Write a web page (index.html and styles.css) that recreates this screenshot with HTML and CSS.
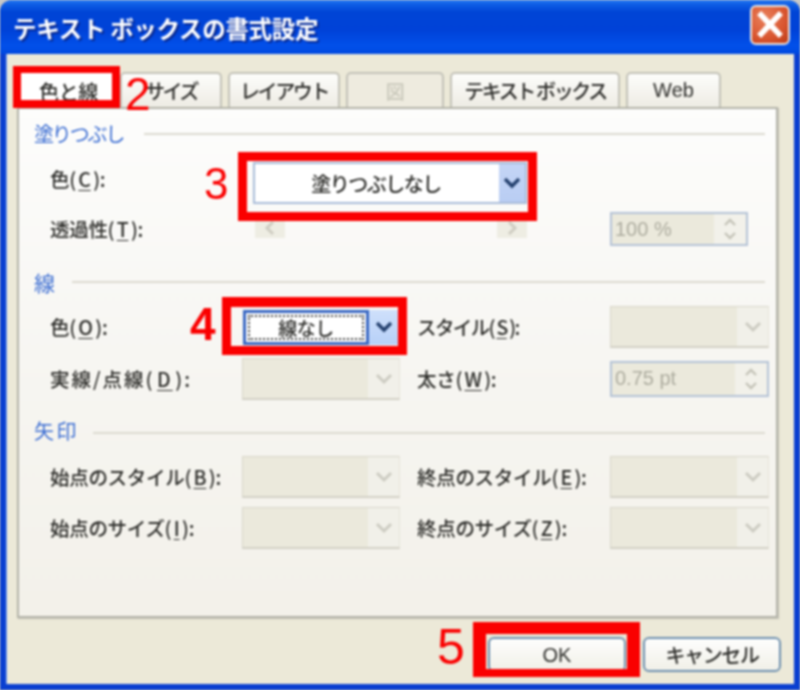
FILE: index.html
```html
<!DOCTYPE html>
<html lang="ja">
<head>
<meta charset="utf-8">
<title>テキスト ボックスの書式設定</title>
<link rel="stylesheet" href="styles.css">
</head>
<body>
<div class="window">
  <header class="titlebar">
    <span class="title">テキスト ボックスの書式設定</span>
    <button class="close" aria-label="閉じる">
      <svg viewBox="0 0 40 40" width="40" height="40"><path d="M11 10 L29 29 M29 10 L11 29" stroke="#fff" stroke-width="5.5" stroke-linecap="square" fill="none"/></svg>
    </button>
  </header>
  <div class="client">
    <nav class="tabs">
      <span class="tab tab-active">色と線</span>
      <span class="tab tab-size">サイズ</span>
      <span class="tab tab-layout">レイアウト</span>
      <span class="tab tab-pic"><span class="pic-glyph">図</span></span>
      <span class="tab tab-textbox">テキスト ボックス</span>
      <span class="tab tab-web">Web</span>
    </nav>
    <main class="panel">
      <div class="heading heading-first"><span>塗りつぶし</span><i class="rule"></i></div>
      <div class="row row-fill">
        <label class="label">色(<u>C</u>):</label>
        <div class="combo">
          <span class="combo-text">塗りつぶしなし</span>
          <span class="combo-btn"><svg viewBox="0 0 20 14" width="20" height="14"><path d="M3 3 L10 10 L17 3" stroke="#24406e" stroke-width="3.4" fill="none"/></svg></span>
        </div>
      </div>
      <div class="row row-alpha">
        <label class="label">透過性(<u>T</u>):</label>
        <div class="slider">
          <span class="slider-btn"><svg viewBox="0 0 14 18" width="14" height="18"><path d="M10 3 L4 9 L10 15" stroke="#cfcdc2" stroke-width="3" fill="none"/></svg></span>
          <span class="slider-btn"><svg viewBox="0 0 14 18" width="14" height="18"><path d="M4 3 L10 9 L4 15" stroke="#cfcdc2" stroke-width="3" fill="none"/></svg></span>
        </div>
        <i></i>
        <div class="spin"><span class="spin-text">100 %</span><span class="spin-btn"><svg viewBox="0 0 16 28" width="16" height="28"><path d="M3 10 L8 5 L13 10 M3 18 L8 23 L13 18" stroke="#c4c3b8" stroke-width="2.4" fill="none"/></svg></span></div>
      </div>

      <div class="heading heading-line"><span>線</span><i class="rule"></i></div>
      <div class="row row-line1">
        <label class="label">色(<u>O</u>):</label>
        <div class="combo combo-focus">
          <span class="combo-text"><span class="focus-box">線なし</span></span>
          <span class="combo-btn"><svg viewBox="0 0 20 14" width="20" height="14"><path d="M3 3 L10 10 L17 3" stroke="#24406e" stroke-width="3.4" fill="none"/></svg></span>
        </div>
        <i></i>
        <label class="label label-tight">スタイル(<u>S</u>):</label>
        <div class="select"><span class="select-btn"><svg viewBox="0 0 20 14" width="20" height="14"><path d="M3 3 L10 10 L17 3" stroke="#cdccc2" stroke-width="3" fill="none"/></svg></span></div>
      </div>
      <div class="row row-line2">
        <label class="label label-wide">実線/点線(<u>D</u>):</label>
        <div class="select"><span class="select-btn"><svg viewBox="0 0 20 14" width="20" height="14"><path d="M3 3 L10 10 L17 3" stroke="#cdccc2" stroke-width="3" fill="none"/></svg></span></div>
        <i></i>
        <label class="label">太さ(<u>W</u>):</label>
        <div class="spin spin-tall"><span class="spin-text">0.75 pt</span><span class="spin-btn"><svg viewBox="0 0 16 28" width="16" height="28"><path d="M3 10 L8 5 L13 10 M3 18 L8 23 L13 18" stroke="#c4c3b8" stroke-width="2.4" fill="none"/></svg></span></div>
      </div>

      <div class="heading heading-arrow"><span>矢印</span><i class="rule"></i></div>
      <div class="row row-arrow1">
        <label class="label">始点のスタイル(<u>B</u>):</label>
        <div class="select"><span class="select-btn"><svg viewBox="0 0 20 14" width="20" height="14"><path d="M3 3 L10 10 L17 3" stroke="#cdccc2" stroke-width="3" fill="none"/></svg></span></div>
        <i></i>
        <label class="label">終点のスタイル(<u>E</u>):</label>
        <div class="select"><span class="select-btn"><svg viewBox="0 0 20 14" width="20" height="14"><path d="M3 3 L10 10 L17 3" stroke="#cdccc2" stroke-width="3" fill="none"/></svg></span></div>
      </div>
      <div class="row row-arrow2">
        <label class="label">始点のサイズ(<u>I</u>):</label>
        <div class="select"><span class="select-btn"><svg viewBox="0 0 20 14" width="20" height="14"><path d="M3 3 L10 10 L17 3" stroke="#cdccc2" stroke-width="3" fill="none"/></svg></span></div>
        <i></i>
        <label class="label">終点のサイズ(<u>Z</u>):</label>
        <div class="select"><span class="select-btn"><svg viewBox="0 0 20 14" width="20" height="14"><path d="M3 3 L10 10 L17 3" stroke="#cdccc2" stroke-width="3" fill="none"/></svg></span></div>
      </div>
    </main>
    <footer class="footer">
      <button class="btn btn-ok">OK</button>
      <button class="btn btn-cancel">キャンセル</button>
    </footer>
  </div>

  <span class="mark mark-tab"></span>
  <span class="mark mark-fill"></span>
  <span class="mark mark-line"></span>
  <span class="mark mark-ok"></span>
  <span class="num num2">2</span>
  <span class="num num3">3</span>
  <span class="num num4">4</span>
  <span class="num num5">5</span>
</div>
</body>
</html>
```
FILE: styles.css
```css
* { box-sizing: border-box; }
html, body { margin: 0; padding: 0; background: #c9c9c6; }
body { width: 800px; height: 690px; overflow: hidden; font-family: "Noto Sans CJK JP", "Liberation Sans", sans-serif; }

.window {
  position: relative;
  width: 800px;
  height: 690px;
  display: flex;
  flex-direction: column;
  border-radius: 12px 12px 0 0;
  background: #0a3fd0;
  filter: blur(0.85px);
  overflow: hidden;
}

.titlebar {
  height: 54px;
  flex: none;
  display: flex;
  align-items: center;
  justify-content: space-between;
  padding: 0 10px 0 13px;
  background: linear-gradient(180deg, #2a7cf2 0, #0f5fe6 4px, #0045d6 12px, #0042d8 30px, #0250ea 46px, #0049e0 54px);
}
.title {
  color: #fff;
  font-size: 23.5px;
  font-weight: 700;
  line-height: 1;
  letter-spacing: -0.3px;
  text-shadow: 2px 2px 1px #0a2a90;
  margin-top: 4px;
}
.close {
  width: 40px;
  height: 40px;
  padding: 0;
  margin-top: -5px;
  border: 2px solid #e9e4e0;
  border-radius: 6px;
  background: radial-gradient(circle at 35% 30%, #e9815c 0, #d9552f 60%, #bb3a16 100%);
  display: flex;
  align-items: center;
  justify-content: center;
}
.close svg { margin: -2px; }

.client {
  flex: 1;
  margin: 0 6px 6px 7px;
  padding: 18px 16px 0 10px;
  background: #ece9d8;
  display: flex;
  flex-direction: column;
  box-shadow: -1px 0 0 #7fa6f0;
}

.tabs {
  height: 35px;
  flex: none;
  display: flex;
  align-items: flex-end;
  gap: 6px;
}
.tab {
  height: 35px;
  display: flex;
  align-items: center;
  justify-content: center;
  font-size: 20px;
  font-weight: 500;
  color: #2e2e2b;
  background: linear-gradient(180deg, #fdfdfb, #eeece4);
  border: 2px solid #c3c2b8;
  border-bottom: 0;
  border-radius: 5px 5px 0 0;
  letter-spacing: -0.4px;
}
.tab-active { width: 103px; height: 37px; margin-right: -6px; background: #fff; padding-top: 3px; }
.tab-size { width: 102px; letter-spacing: -2.4px; }
.tab-layout { width: 112px; letter-spacing: -2.4px; }
.tab-pic { width: 98px; background: #eeebdf; }
.pic-glyph { color: #c9c8bb; font-size: 19px; }
.tab-textbox { width: 170px; letter-spacing: -2.4px; }
.tab-web { width: 95px; font-family: "Liberation Sans", sans-serif; letter-spacing: 0; }

.panel {
  height: 511px;
  flex: none;
  border: 2px solid #b3b3a8;
  background: linear-gradient(180deg, #fdfdfc 0, #f7f6f2 50%, #f3f1ea 100%);
  box-shadow: 1px 1px 1px #c9c8bc;
  padding-top: 13px;
}

.heading {
  height: 24px;
  display: flex;
  align-items: center;
  padding: 0 11px 0 15px;
  font-size: 20px;
  line-height: 24px;
  color: #3a6cd2;
}
.rule { flex: 1; height: 2px; background: #dcdad0; }
.heading-first { gap: 21px; letter-spacing: -2.2px; }
.heading-line { margin-top: 24px; gap: 17px; font-size: 21px; }
.heading-arrow { margin-top: 19px; gap: 14px; letter-spacing: 2.5px; }
.heading-arrow .rule { position: relative; top: 2px; }

.row {
  display: grid;
  grid-template-columns: 192px 158px 17px 193px 159px;
  padding-left: 31px;
  align-items: center;
}
.label { font-size: 19.5px; font-weight: 500; line-height: 24px; color: #2e2e2b; letter-spacing: -0.3px; white-space: nowrap; }
.label u { margin: 0 2.5px; text-underline-offset: 3px; }
.label-tight { letter-spacing: -1.6px; }
.label-wide { letter-spacing: 2px; }

.row-fill { grid-template-columns: 203px 274px; height: 42px; margin-top: 16px; }
.row-fill .label { margin-top: -8px; }
.row-alpha { grid-template-columns: 205px 272px 83px 138px; height: 34px; margin-top: 8px; }
.row-line1 { height: 41px; margin-top: 12px; }
.row-line2 { height: 42px; margin-top: 11px; }
.row-arrow1 { height: 42px; margin-top: 13px; }
.row-arrow2 { height: 42px; margin-top: 9px; }

.combo {
  height: 42px;
  display: flex;
  background: #fff;
  border: 2px solid #a9bcd8;
}
.combo-text {
  flex: 1;
  display: flex;
  align-items: center;
  justify-content: center;
  font-size: 20px;
  font-weight: 500;
  color: #2e2e2b;
  letter-spacing: -1.5px;
  padding-right: 2px;
}
.combo-btn {
  width: 26px;
  flex: none;
  display: flex;
  align-items: center;
  justify-content: center;
  background: linear-gradient(180deg, #c4d5f6, #b9cdf3);
}

.combo-focus {
  height: 35px;
  margin: 0 1px;
  border: 0;
  background: none;
}
.combo-focus .combo-text {
  border: 3px solid #3a68c2;
  background: #fff;
  padding: 2px;
  letter-spacing: -0.5px;
}
.combo-focus .combo-btn { width: 30px; background: linear-gradient(180deg, #cfe0fb, #b7d0f8); }
.focus-box {
  width: 100%;
  height: 100%;
  display: flex;
  align-items: center;
  justify-content: center;
  border: 2px dotted #444;
  font-size: 19px;
  line-height: 1;
}

.select {
  height: 42px;
  display: flex;
  justify-content: flex-end;
  background: #ebe9dc;
  border: 1px solid #d8d6ca;
  border-right-color: #e6e4d9;
  border-bottom: 2px solid #d3d1c6;
}
.select-btn {
  width: 31px;
  display: flex;
  align-items: center;
  justify-content: center;
  background: #f1f0e9;
}

.slider {
  height: 20px;
  margin-top: -2px;
  display: flex;
  justify-content: space-between;
}
.slider-btn {
  width: 30px;
  display: flex;
  align-items: center;
  justify-content: center;
  background: #eeede3;
}

.spin {
  height: 34px;
  display: flex;
  justify-content: space-between;
  background: #ebe9dc;
  border: 2px solid #b5c3d6;
}
.spin-tall { height: 36px; }
.spin-text {
  font-family: "Liberation Sans", sans-serif;
  font-size: 20px;
  line-height: 30px;
  padding-left: 3px;
  color: #adac9f;
}
.spin-btn {
  width: 32px;
  display: flex;
  align-items: center;
  justify-content: center;
  background: #f2f1ea;
}

.footer {
  flex: 1;
  display: flex;
  justify-content: flex-end;
  gap: 17px;
  margin-right: -3px;
  padding-top: 19px;
}
.btn {
  width: 138px;
  height: 35px;
  padding: 0;
  border: 2px solid #6d8fae;
  border-radius: 6px;
  background: linear-gradient(180deg, #fefefd, #f1f0e8);
  font-family: "Noto Sans CJK JP", sans-serif;
  font-size: 20px;
  font-weight: 500;
  line-height: 1;
  color: #2e2e2b;
}
.btn-cancel { letter-spacing: -1.4px; }
.btn-ok { font-family: "Liberation Sans", sans-serif; letter-spacing: 0; }

.mark { position: absolute; border: solid #fa0000; }
.mark-tab { left: 13px; top: 66px; width: 107px; height: 42px; border-width: 7px 8px 8px 8px; }
.mark-fill { left: 238px; top: 152px; width: 299px; height: 69px; border-width: 9px; }
.mark-line { left: 222px; top: 297px; width: 185px; height: 58px; border-width: 10px 9px 9px 9px; }
.mark-ok { left: 473px; top: 622px; width: 167px; height: 55px; border-width: 12px 13px 8px 13px; }

.num {
  position: absolute;
  font-family: "Liberation Sans", sans-serif;
  font-size: 46px;
  line-height: 1;
  color: #fa0000;
}
.num2 { left: 125px; top: 71px; }
.num3 { left: 204px; top: 162px; font-size: 44px; }
.num4 { left: 190px; top: 301px; font-weight: 700; }
.num5 { left: 437px; top: 622px; font-size: 50px; }
```
